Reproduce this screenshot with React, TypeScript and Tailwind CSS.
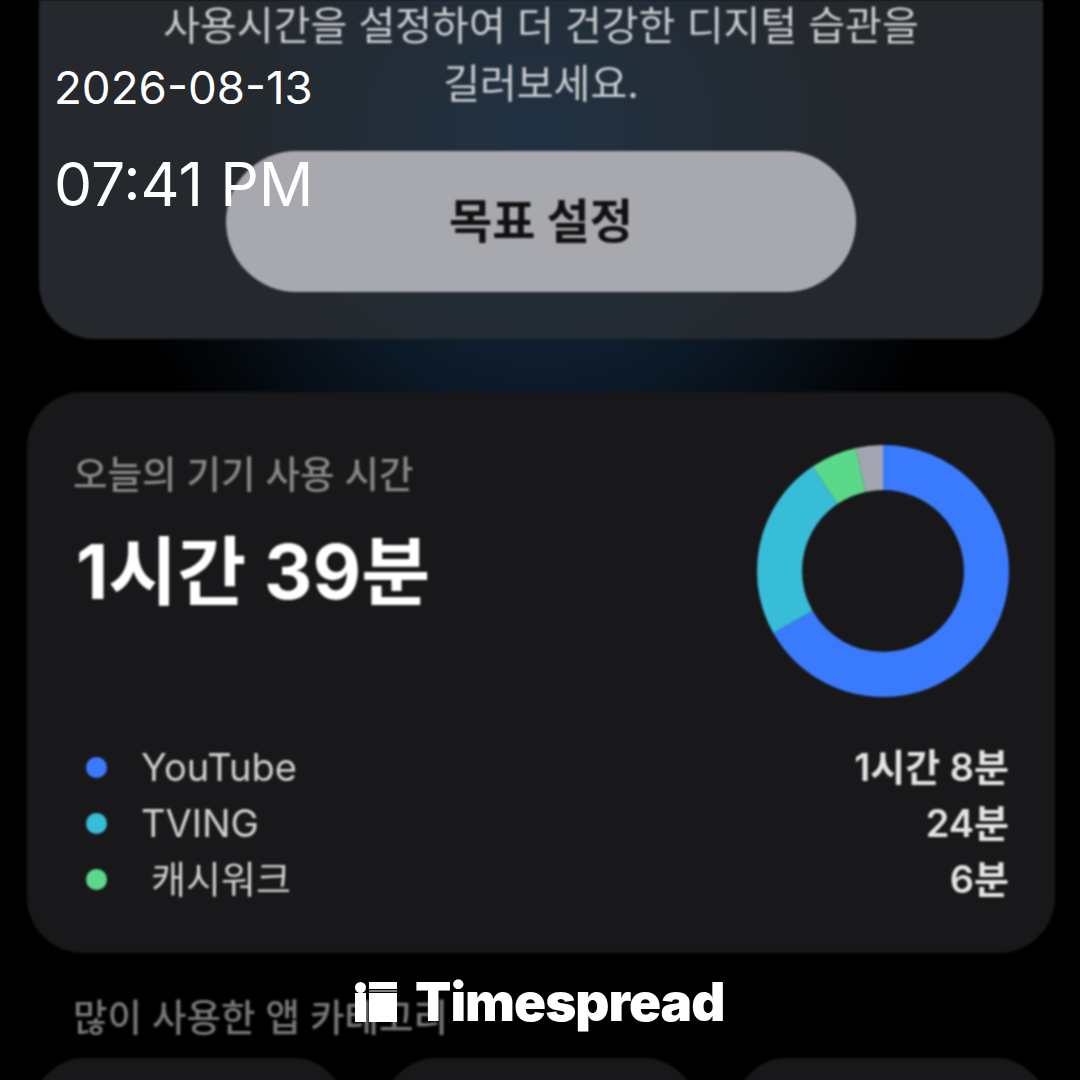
import React from "react";

const FONT = "font-['Inter','Noto_Sans_CJK_KR',sans-serif]";

const usage = [
  { name: "YouTube", time: "1시간 8분", dot: "bg-[#3a7bfd]", nameClass: "" },
  { name: "TVING", time: "24분", dot: "bg-[#38bdd8]", nameClass: "" },
  { name: "캐시워크", time: "6분", dot: "bg-[#5bd98a]", nameClass: "pl-[10px]" },
];

const slices = [
  { color: "#3a7bfd", from: 0, to: 240.5 },
  { color: "#38bdd8", from: 240.5, to: 326 },
  { color: "#5bd98a", from: 326, to: 347.6 },
  { color: "#a3a6b2", from: 347.6, to: 360 },
];

function Ring() {
  return (
    <svg width="252" height="252" viewBox="0 0 252 252" className="shrink-0">
      {slices.map((s) => (
        <circle
          key={s.color}
          cx="126"
          cy="126"
          r="103.5"
          fill="none"
          stroke={s.color}
          strokeWidth="45"
          pathLength={360}
          strokeDasharray={`${s.to - s.from} ${360 - (s.to - s.from)}`}
          strokeDashoffset={-s.from}
          transform="rotate(-90 126 126)"
        />
      ))}
    </svg>
  );
}

function Logo() {
  return (
    <svg width="42" height="40" viewBox="0 0 42 40" fill="#fff" className="shrink-0">
      <circle cx="5.5" cy="5.5" r="5.5" />
      <rect x="0" y="11" width="11" height="29" />
      <rect x="14" y="0" width="28" height="7" />
      <rect x="14" y="8.5" width="28" height="1" />
      <rect x="14" y="11" width="28" height="29" />
    </svg>
  );
}

export default function App() {
  return (
    <div className={`${FONT} relative h-[1080px] w-[1080px] overflow-hidden bg-black bg-[radial-gradient(ellipse_420px_400px_at_540px_190px,#1b2c42_0%,#0b1825_55%,#000000_100%)]`}>
      <div className="blur-[1px]">
        <section className="ml-[39px] mr-[37px] flex h-[339px] flex-col items-center rounded-b-[56px] bg-[#25282c] bg-[radial-gradient(ellipse_340px_300px_at_500px_130px,#213142_0%,#25282c_100%)]">
          <p className="-mt-[3px] text-center text-[40px] leading-[58px] text-[#c9cbce]">
            사용시간을 설정하여 더 건강한 디지털 습관을
            <br />
            길러보세요.
          </p>
          <button className="mt-[38px] h-[141px] w-[630px] rounded-full bg-[#a7a9ae] text-[47px] font-bold text-[#111]">
            목표 설정
          </button>
        </section>

        <section className="ml-[27px] mr-[25px] mt-[53px] h-[561px] rounded-[56px] bg-[#18181a] pl-[46px] pr-[46px] pt-[53px]">
          <div className="flex justify-between">
            <div>
              <h2 className="pt-[5px] text-[37.5px] font-medium leading-[50px] text-[#868687]">오늘의 기기 사용 시간</h2>
              <p className="ml-[3px] mt-[34px] text-[75px] font-bold leading-[76px] text-white">1시간 39분</p>
            </div>
            <Ring />
          </div>
          <ul className="mt-[42px]">
            {usage.map((u) => (
              <li key={u.name} className="flex h-[56px] items-center justify-between text-[38px]">
                <span className="flex items-center">
                  <span className={`ml-[13px] h-[21px] w-[21px] rounded-full ${u.dot}`} />
                  <span className={`ml-[34px] text-[#cfcfd0] ${u.nameClass}`}>{u.name}</span>
                </span>
                <span className="font-semibold text-[#e4e4e5]">{u.time}</span>
              </li>
            ))}
          </ul>
        </section>

        <h3 className="ml-[73px] mt-[40px] text-[37.5px] font-medium leading-[50px] text-[#767677]">많이 사용한 앱 카테고리</h3>
        <div className="mx-[33px] mt-[15px] grid grid-cols-3 gap-[39px]">
          <div className="h-[120px] rounded-t-[52px] bg-[#18181a]" />
          <div className="h-[120px] rounded-t-[52px] bg-[#18181a]" />
          <div className="h-[120px] rounded-t-[52px] bg-[#18181a]" />
        </div>
      </div>

      <div className="absolute left-[54px] top-[60px] text-[45.7px] leading-[55px] text-white">2026-08-13</div>
      <div className="absolute left-[54px] top-[147px] text-[60.5px] leading-[74px] text-white">07:41 PM</div>

      <div className="absolute left-[355px] top-[982px] flex items-center gap-[18px]">
        <Logo />
        <span className="text-[53px] font-black leading-[40px] tracking-[-1px] text-white">Timespread</span>
      </div>
    </div>
  );
}
